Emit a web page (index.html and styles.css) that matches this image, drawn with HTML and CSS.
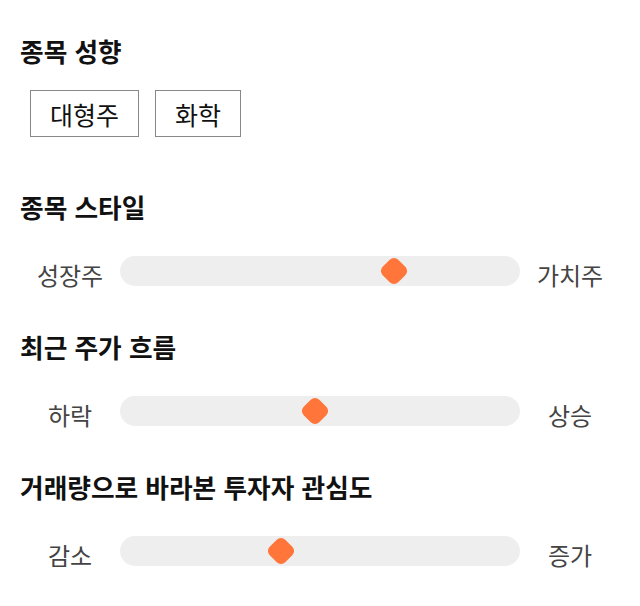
FILE: index.html
```html
<!DOCTYPE html>
<html lang="ko">
<head>
    <meta charset="UTF-8">
    <meta name="viewport" content="width=device-width, initial-scale=1.0">
    <title>종목 분석</title>
    <link rel="stylesheet" href="styles.css">
</head>
<body>

<div class="section section-tags">
    <h2 class="title">종목 성향</h2>
    <div class="tags">
        <span class="tag">대형주</span>
        <span class="tag">화학</span>
    </div>
</div>

<div class="section">
    <h2 class="title">종목 스타일</h2>
    <div class="slider-row">
        <span class="label">성장주</span>
        <div class="track"><span class="thumb" style="left: 68.5%"></span></div>
        <span class="label">가치주</span>
    </div>
</div>

<div class="section">
    <h2 class="title">최근 주가 흐름</h2>
    <div class="slider-row">
        <span class="label">하락</span>
        <div class="track"><span class="thumb" style="left: 48.75%"></span></div>
        <span class="label">상승</span>
    </div>
</div>

<div class="section">
    <h2 class="title">거래량으로 바라본 투자자 관심도</h2>
    <div class="slider-row">
        <span class="label">감소</span>
        <div class="track"><span class="thumb" style="left: 40.25%"></span></div>
        <span class="label">증가</span>
    </div>
</div>

</body>
</html>
```

FILE: styles.css
```css
body {
    font-family: "Noto Sans CJK KR", "Noto Sans", sans-serif;
    background-color: #fff;
    margin: 0;
    padding: 36px 20px 0;
    color: #111;
}

.section {
    margin-bottom: 46px;
}

.section-tags {
    margin-bottom: 55px;
}

.title {
    margin: 0;
    font-size: 25.7px;
    font-weight: bold;
    line-height: 30px;
    color: #111;
}

.tags {
    display: flex;
    gap: 16px;
    margin-top: 24px;
    padding-left: 10px;
}

.tag {
    display: inline-block;
    height: 45px;
    line-height: 47px;
    padding: 0 19px;
    border: 1px solid #888;
    font-size: 25px;
    color: #111;
}

.slider-row {
    display: flex;
    align-items: center;
    margin-top: 34px;
    height: 30px;
}

.label {
    width: 100px;
    text-align: center;
    font-size: 24px;
    color: #444;
    padding-top: 6px;
}

.track {
    position: relative;
    flex: 1;
    height: 30px;
    border-radius: 15px;
    background-color: #eee;
}

.thumb {
    position: absolute;
    top: 50%;
    width: 22px;
    height: 22px;
    border-radius: 6px;
    background-color: #ff753a;
    transform: translate(-50%, -50%) rotate(45deg);
}
```
